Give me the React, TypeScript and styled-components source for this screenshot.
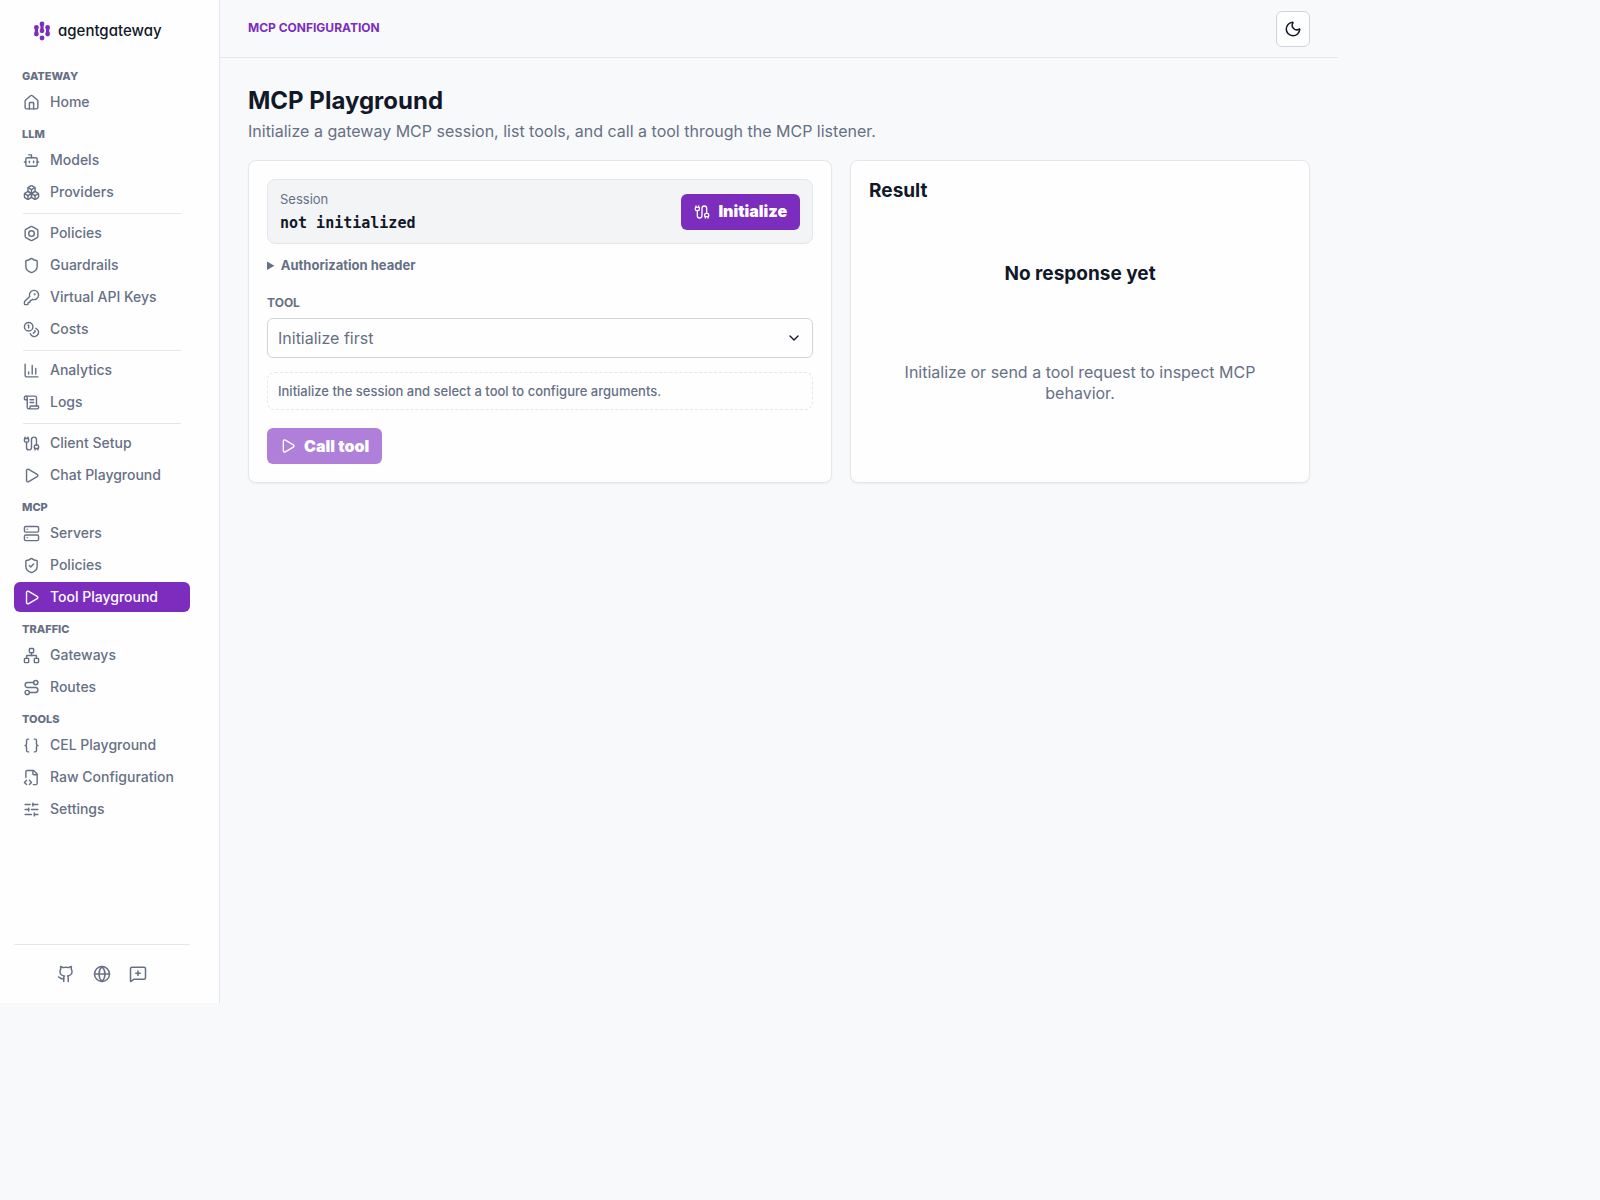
import React from "react";
import styled, { createGlobalStyle } from "styled-components";
import {
  House, Bot, Boxes, Bolt, Shield, KeyRound, Coins, ChartColumn, ScrollText, Cable, Play,
  Server, ShieldCheck, Network, Route, Braces, FileCode2, SlidersHorizontal, Github, Globe,
  MessageSquarePlus, Moon, ChevronDown, type LucideIcon,
} from "lucide-react";

const color = {
  page: "#f8f9fb",
  surface: "#fefefe",
  muted: "#f3f4f6",
  border: "#e4e7ec",
  strong: "#d0d5dd",
  ink: "#111827",
  text: "#667085",
  accent: "#7c2dbe",
};

const GlobalStyle = createGlobalStyle`
  *, *::before, *::after { box-sizing: border-box; }
  body {
    margin: 0;
    background: ${color.page};
    color: ${color.ink};
    font: 400 16px/21px Inter, "Liberation Sans", sans-serif;
  }
  h1, h2, h3, p { margin: 0; }
  button, select { font: inherit; }
`;

const Shell = styled.div`
  display: grid;
  grid-template-columns: 220px minmax(0, 1fr);
  min-height: calc(100vh - 197px);
  margin: 0 262px 197px 0;
`;

const Sidebar = styled.aside`
  display: flex;
  flex-direction: column;
  padding: 14px 29px 13px 14px;
  background: ${color.surface};
  border-right: 1px solid ${color.border};
`;

const Brand = styled.a`
  display: flex;
  align-items: center;
  gap: 7px;
  height: 34px;
  padding-left: 19px;
  color: ${color.ink};
  text-decoration: none;
`;

const Wordmark = styled.span`
  font-size: 15px;
  font-weight: 500;
  line-height: 20px;
  font-feature-settings: "cv11";
`;

const Nav = styled.nav`
  display: flex;
  flex-direction: column;
  padding-top: 21px;
`;

const Section = styled.section`
  display: flex;
  flex-direction: column;
  & + & { margin-top: 10px; }
`;

const SectionLabel = styled.h2`
  padding: 0 8px;
  margin-bottom: 4px;
  color: ${color.text};
  font-size: 11px;
  font-weight: 800;
  line-height: 14px;
  text-transform: uppercase;
`;

const Group = styled.div`
  display: flex;
  flex-direction: column;
  gap: 2px;
`;

const Divider = styled.hr`
  width: calc(100% - 18px);
  margin: 6px 9px 4px;
  border: 0;
  border-top: 1px solid ${color.border};
`;

const NavLink = styled.a<{ $active?: boolean }>`
  display: flex;
  align-items: center;
  gap: 10px;
  height: 30px;
  padding: 0 9px;
  border-radius: 6px;
  background: ${(p) => (p.$active ? color.accent : "transparent")};
  color: ${(p) => (p.$active ? "#ffffff" : color.text)};
  font-size: 14px;
  font-weight: 500;
  line-height: 18px;
  text-decoration: none;
  white-space: nowrap;
`;

const SidebarFooter = styled.footer`
  display: flex;
  justify-content: center;
  gap: 4px;
  margin-top: auto;
  padding-top: 13px;
  border-top: 1px solid ${color.border};
`;

const FooterLink = styled.a`
  display: grid;
  place-items: center;
  width: 32px;
  height: 32px;
  color: ${color.text};
`;

const Main = styled.div`
  min-width: 0;
`;

const TopBar = styled.header`
  display: flex;
  justify-content: space-between;
  padding: 11px 28px 10px;
  border-bottom: 1px solid ${color.border};
`;

const Eyebrow = styled.span`
  padding-top: 9px;
  color: ${color.accent};
  font-size: 12px;
  font-weight: 700;
  line-height: 16px;
  text-transform: uppercase;
`;

const IconButton = styled.button`
  display: grid;
  place-items: center;
  width: 34px;
  height: 36px;
  padding: 0;
  border: 1px solid ${color.strong};
  border-radius: 6px;
  background: ${color.surface};
  color: ${color.ink};
`;

const Content = styled.main`
  padding: 28px;
`;

const Title = styled.h1`
  font-size: 24px;
  font-weight: 700;
  line-height: 30px;
`;

const Lead = styled.p`
  margin: 5px 0 18px;
  color: ${color.text};
`;

const Panels = styled.div`
  display: grid;
  grid-template-columns: minmax(0, 1.27fr) minmax(0, 1fr);
  gap: 18px;
`;

const Card = styled.section`
  display: flex;
  flex-direction: column;
  align-items: stretch;
  padding: 18px;
  border: 1px solid ${color.border};
  border-radius: 8px;
  background: ${color.surface};
  box-shadow: 0 1px 2px rgba(17, 24, 39, 0.05);
`;

const SessionBar = styled.div`
  display: flex;
  align-items: center;
  justify-content: space-between;
  padding: 10px 12px;
  border: 1px solid ${color.border};
  border-radius: 8px;
  background: ${color.muted};
`;

const SessionInfo = styled.div`
  display: grid;
  gap: 5px;
`;

const SessionLabel = styled.span`
  color: ${color.text};
  font-size: 13px;
  line-height: 18px;
`;

const SessionValue = styled.strong`
  font: 700 15px/20px "DejaVu Sans Mono", "Liberation Mono", monospace;
`;

const PrimaryButton = styled.button`
  display: inline-flex;
  align-items: center;
  gap: 8px;
  height: 36px;
  padding: 0 12px;
  border: 1px solid transparent;
  border-radius: 6px;
  background: ${color.accent} border-box;
  color: #ffffff;
  font-weight: 900;
  &:disabled { background-color: #b07fd9; }
`;

const Actions = styled.div`
  display: flex;
`;

const AuthDetails = styled.details`
  margin-top: 11px;
  color: ${color.text};
  font-size: 13px;
  font-weight: 700;
  line-height: 20px;
`;

const FieldLabel = styled.label`
  margin: 20px 0 7px;
  color: ${color.text};
  font-size: 12px;
  font-weight: 700;
  line-height: 16px;
  text-transform: uppercase;
`;

const SelectBox = styled.div`
  display: grid;
  align-items: center;
  > * { grid-area: 1 / 1; }
  > svg { justify-self: end; margin-right: 11px; pointer-events: none; }
`;

const Select = styled.select`
  appearance: none;
  width: 100%;
  height: 40px;
  padding: 0 10px;
  border: 1px solid ${color.strong};
  border-radius: 6px;
  background: ${color.surface};
  color: ${color.text};
  opacity: 1;
`;

const Hint = styled.p`
  margin: 14px 0 18px;
  padding: 9px 10px;
  border: 1px dashed ${color.border};
  border-radius: 8px;
  color: ${color.text};
  font-size: 13px;
  font-weight: 500;
  line-height: 18px;
`;

const CardTitle = styled.h2`
  font-size: 19px;
  font-weight: 700;
  line-height: 23px;
`;

const EmptyState = styled.div`
  display: grid;
  flex: 1;
  align-content: space-around;
  justify-items: center;
  padding: 22px;
  text-align: center;
  p { color: ${color.text}; }
`;

type Item = { label: string; icon: LucideIcon; active?: boolean };

const sections: { label: string; groups: Item[][] }[] = [
  { label: "Gateway", groups: [[{ label: "Home", icon: House }]] },
  {
    label: "LLM",
    groups: [
      [{ label: "Models", icon: Bot }, { label: "Providers", icon: Boxes }],
      [
        { label: "Policies", icon: Bolt },
        { label: "Guardrails", icon: Shield },
        { label: "Virtual API Keys", icon: KeyRound },
        { label: "Costs", icon: Coins },
      ],
      [{ label: "Analytics", icon: ChartColumn }, { label: "Logs", icon: ScrollText }],
      [{ label: "Client Setup", icon: Cable }, { label: "Chat Playground", icon: Play }],
    ],
  },
  {
    label: "MCP",
    groups: [[
      { label: "Servers", icon: Server },
      { label: "Policies", icon: ShieldCheck },
      { label: "Tool Playground", icon: Play, active: true },
    ]],
  },
  {
    label: "Traffic",
    groups: [[{ label: "Gateways", icon: Network }, { label: "Routes", icon: Route }]],
  },
  {
    label: "Tools",
    groups: [[
      { label: "CEL Playground", icon: Braces },
      { label: "Raw Configuration", icon: FileCode2 },
      { label: "Settings", icon: SlidersHorizontal },
    ]],
  },
];

const footerLinks = [
  { label: "GitHub", icon: Github },
  { label: "Website", icon: Globe },
  { label: "Feedback", icon: MessageSquarePlus },
];

function LogoMark() {
  return (
    <svg width="18" height="20" viewBox="0 0 18 20" fill={color.accent} stroke={color.accent} aria-hidden="true">
      <path d="M3.4 6.5v6.5M9 3v6.5M14.6 6.5v6.5" strokeWidth="3.2" />
      <g stroke="none">
        <circle cx="3.4" cy="6.4" r="2.4" />
        <circle cx="3.4" cy="13" r="2.4" />
        <circle cx="9" cy="3" r="2.4" />
        <circle cx="9" cy="9.8" r="2.4" />
        <circle cx="9" cy="17" r="2.4" />
        <circle cx="14.6" cy="6.4" r="2.4" />
        <circle cx="14.6" cy="13" r="2.4" />
      </g>
    </svg>
  );
}

export default function App() {
  return (
    <>
      <GlobalStyle />
      <Shell>
        <Sidebar>
          <Brand href="#">
            <LogoMark />
            <Wordmark>agentgateway</Wordmark>
          </Brand>
          <Nav>
            {sections.map((section) => (
              <Section key={section.label}>
                <SectionLabel>{section.label}</SectionLabel>
                {section.groups.map((items, index) => (
                  <React.Fragment key={index}>
                    {index > 0 && <Divider />}
                    <Group>
                      {items.map(({ label, icon: Icon, active }) => (
                        <NavLink key={label} href="#" $active={active} aria-current={active ? "page" : undefined}>
                          <Icon size={17} />
                          {label}
                        </NavLink>
                      ))}
                    </Group>
                  </React.Fragment>
                ))}
              </Section>
            ))}
          </Nav>
          <SidebarFooter>
            {footerLinks.map(({ label, icon: Icon }) => (
              <FooterLink key={label} href="#" aria-label={label}>
                <Icon size={18} />
              </FooterLink>
            ))}
          </SidebarFooter>
        </Sidebar>
        <Main>
          <TopBar>
            <Eyebrow>MCP Configuration</Eyebrow>
            <IconButton type="button" aria-label="Switch to dark theme">
              <Moon size={18} />
            </IconButton>
          </TopBar>
          <Content>
            <Title>MCP Playground</Title>
            <Lead>Initialize a gateway MCP session, list tools, and call a tool through the MCP listener.</Lead>
            <Panels>
              <Card>
                <SessionBar>
                  <SessionInfo>
                    <SessionLabel>Session</SessionLabel>
                    <SessionValue>not initialized</SessionValue>
                  </SessionInfo>
                  <PrimaryButton type="button">
                    <Cable size={16} />
                    Initialize
                  </PrimaryButton>
                </SessionBar>
                <AuthDetails>
                  <summary>Authorization header</summary>
                </AuthDetails>
                <FieldLabel htmlFor="tool">Tool</FieldLabel>
                <SelectBox>
                  <Select id="tool" disabled>
                    <option>Initialize first</option>
                  </Select>
                  <ChevronDown size={16} />
                </SelectBox>
                <Hint>Initialize the session and select a tool to configure arguments.</Hint>
                <Actions>
                  <PrimaryButton type="button" disabled>
                    <Play size={16} />
                    Call tool
                  </PrimaryButton>
                </Actions>
              </Card>
              <Card>
                <CardTitle>Result</CardTitle>
                <EmptyState>
                  <CardTitle as="h3">No response yet</CardTitle>
                  <p>Initialize or send a tool request to inspect MCP behavior.</p>
                </EmptyState>
              </Card>
            </Panels>
          </Content>
        </Main>
      </Shell>
    </>
  );
}
